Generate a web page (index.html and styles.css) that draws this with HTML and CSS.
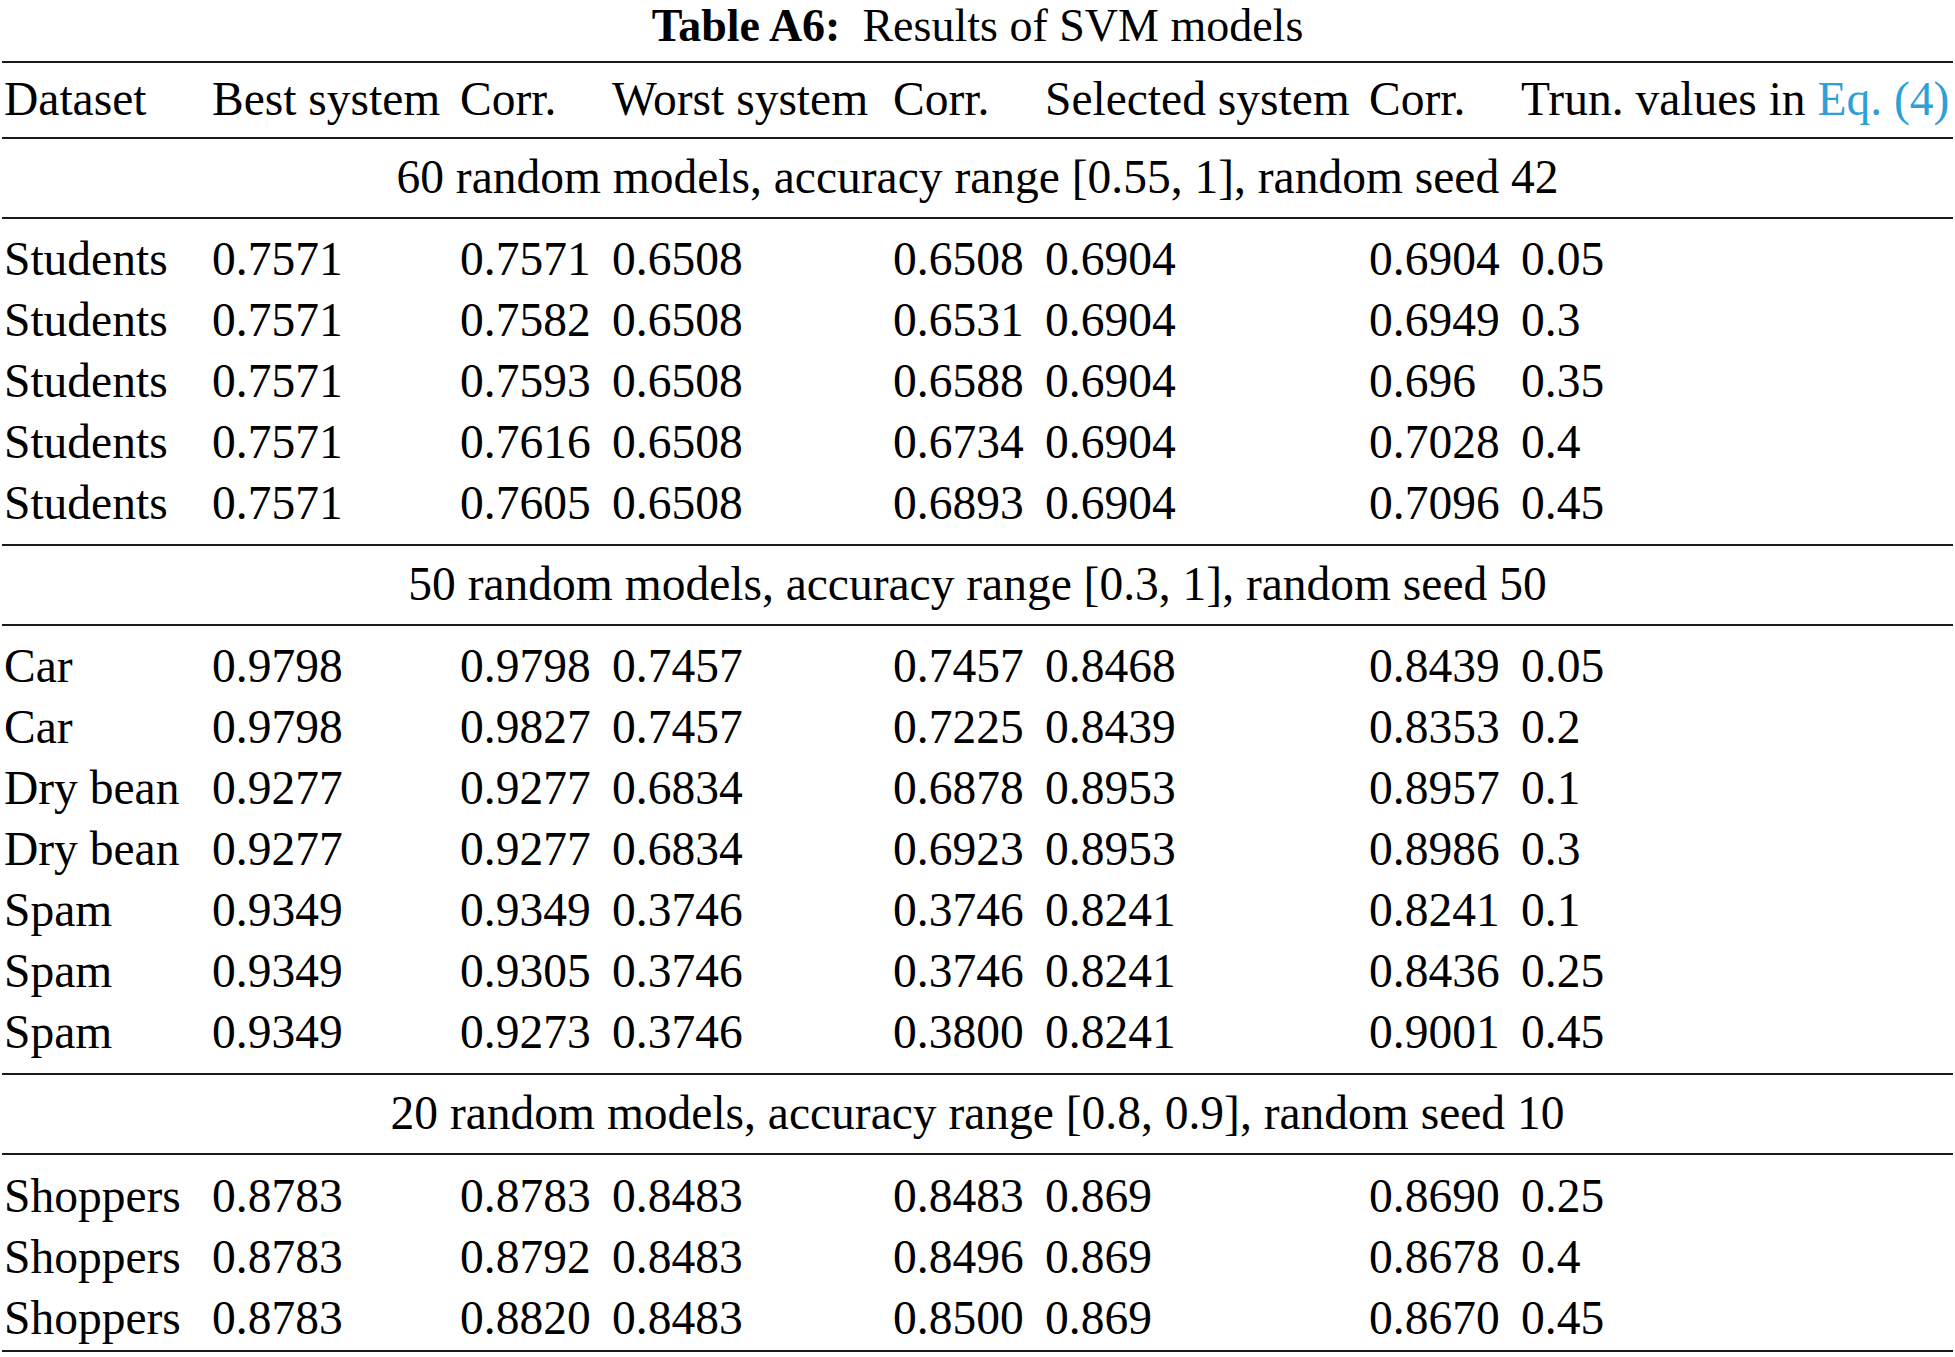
FILE: index.html
```html
<!DOCTYPE html>
<html lang="en">
<head>
<meta charset="utf-8">
<title>Table A6: Results of SVM models</title>
<link rel="stylesheet" href="styles.css">
</head>
<body>
<div class="page">
  <div class="caption"><b class="cap-label">Table A6:</b><span class="cap-text">Results of SVM models</span></div>
  <div class="table">
    <div class="row head">
      <span>Dataset</span><span>Best system</span><span>Corr.</span><span>Worst system</span><span>Corr.</span><span>Selected system</span><span>Corr.</span><span>Trun. values in <a class="ref">Eq. (4)</a></span>
    </div>

    <div class="group">60 random models, accuracy range [0.55, 1], random seed 42</div>
    <div class="body">
      <div class="row"><span>Students</span><span>0.7571</span><span>0.7571</span><span>0.6508</span><span>0.6508</span><span>0.6904</span><span>0.6904</span><span>0.05</span></div>
      <div class="row"><span>Students</span><span>0.7571</span><span>0.7582</span><span>0.6508</span><span>0.6531</span><span>0.6904</span><span>0.6949</span><span>0.3</span></div>
      <div class="row"><span>Students</span><span>0.7571</span><span>0.7593</span><span>0.6508</span><span>0.6588</span><span>0.6904</span><span>0.696</span><span>0.35</span></div>
      <div class="row"><span>Students</span><span>0.7571</span><span>0.7616</span><span>0.6508</span><span>0.6734</span><span>0.6904</span><span>0.7028</span><span>0.4</span></div>
      <div class="row"><span>Students</span><span>0.7571</span><span>0.7605</span><span>0.6508</span><span>0.6893</span><span>0.6904</span><span>0.7096</span><span>0.45</span></div>
    </div>

    <div class="group">50 random models, accuracy range [0.3, 1], random seed 50</div>
    <div class="body">
      <div class="row"><span>Car</span><span>0.9798</span><span>0.9798</span><span>0.7457</span><span>0.7457</span><span>0.8468</span><span>0.8439</span><span>0.05</span></div>
      <div class="row"><span>Car</span><span>0.9798</span><span>0.9827</span><span>0.7457</span><span>0.7225</span><span>0.8439</span><span>0.8353</span><span>0.2</span></div>
      <div class="row"><span>Dry bean</span><span>0.9277</span><span>0.9277</span><span>0.6834</span><span>0.6878</span><span>0.8953</span><span>0.8957</span><span>0.1</span></div>
      <div class="row"><span>Dry bean</span><span>0.9277</span><span>0.9277</span><span>0.6834</span><span>0.6923</span><span>0.8953</span><span>0.8986</span><span>0.3</span></div>
      <div class="row"><span>Spam</span><span>0.9349</span><span>0.9349</span><span>0.3746</span><span>0.3746</span><span>0.8241</span><span>0.8241</span><span>0.1</span></div>
      <div class="row"><span>Spam</span><span>0.9349</span><span>0.9305</span><span>0.3746</span><span>0.3746</span><span>0.8241</span><span>0.8436</span><span>0.25</span></div>
      <div class="row"><span>Spam</span><span>0.9349</span><span>0.9273</span><span>0.3746</span><span>0.3800</span><span>0.8241</span><span>0.9001</span><span>0.45</span></div>
    </div>

    <div class="group">20 random models, accuracy range [0.8, 0.9], random seed 10</div>
    <div class="body last">
      <div class="row"><span>Shoppers</span><span>0.8783</span><span>0.8783</span><span>0.8483</span><span>0.8483</span><span>0.869</span><span>0.8690</span><span>0.25</span></div>
      <div class="row"><span>Shoppers</span><span>0.8783</span><span>0.8792</span><span>0.8483</span><span>0.8496</span><span>0.869</span><span>0.8678</span><span>0.4</span></div>
      <div class="row"><span>Shoppers</span><span>0.8783</span><span>0.8820</span><span>0.8483</span><span>0.8500</span><span>0.869</span><span>0.8670</span><span>0.45</span></div>
    </div>
  </div>
</div>
</body>
</html>
```

FILE: styles.css
```css
html, body {
  margin: 0;
  padding: 0;
  background: #ffffff;
}

body {
  color: #000000;
  font-family: "Liberation Serif", "Times New Roman", serif;
}

.page {
  width: 1951px;
  margin-left: 2px;
}

.caption {
  height: 51px;
  line-height: 51px;
  font-size: 46px;
  text-align: center;
  white-space: nowrap;
  margin-bottom: 10px;
}

.cap-label {
  font-weight: bold;
}

.cap-text {
  margin-left: 22px;
}

.table {
  font-size: 47.5px;
}

.row {
  display: grid;
  grid-template-columns: 208px 248px 152px 281px 152px 324px 152px auto;
  height: 61px;
  line-height: 61px;
  padding-left: 2px;
  white-space: nowrap;
}

.head {
  border-top: 2px solid #1c1c1c;
  padding-top: 6px;
  padding-bottom: 7px;
}

.ref {
  color: #2e9fd9;
  text-decoration: none;
}

.group {
  border-top: 2px solid #1c1c1c;
  padding-top: 8px;
  padding-bottom: 9px;
  height: 61px;
  line-height: 61px;
  text-align: center;
  white-space: nowrap;
}

.body {
  border-top: 2px solid #1c1c1c;
  padding-top: 10px;
  padding-bottom: 10px;
}

.body.last {
  padding-top: 11px;
  padding-bottom: 1px;
  border-bottom: 2px solid #1c1c1c;
}
```
